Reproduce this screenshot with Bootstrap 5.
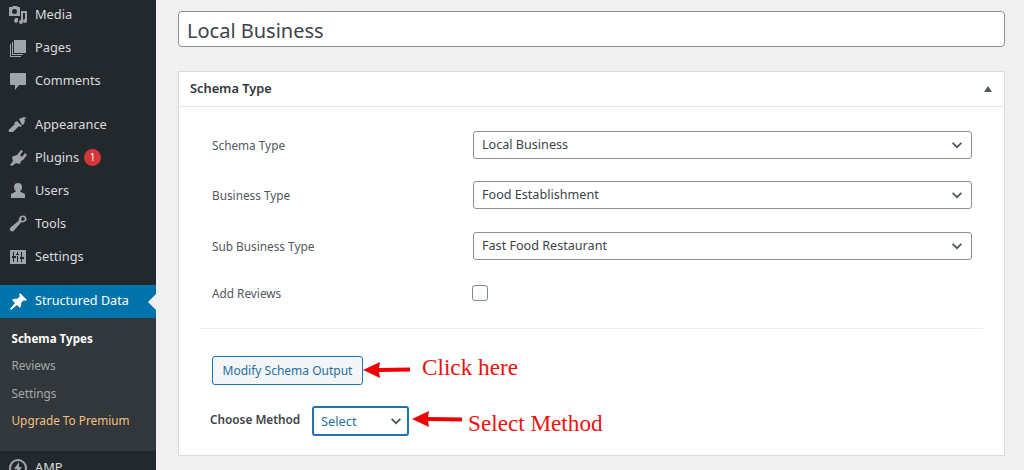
<!DOCTYPE html>
<html lang="en"><head><meta charset="utf-8"><title>Local Business</title>
<link rel="stylesheet" href="https://cdn.jsdelivr.net/npm/bootstrap@5.3.0/dist/css/bootstrap.min.css">
<style>
html,body{height:470px;overflow:hidden}
body{background:#f0f0f1;font-family:"Noto Sans","Open Sans",sans-serif;color:#3c434a;width:1024px}
.wp-shell{height:470px}
.wp-side{width:156px;flex:none;background:#23282d;height:470px;overflow:hidden;margin-right:1px}
.wp-menu{margin-top:-2px}
.wp-item{height:33px;display:flex;align-items:center;color:#d9dbdd;font-size:12.8px;padding-left:8px;text-decoration:none;position:relative}
.wp-item:hover{color:#d9dbdd}
.wp-item svg{width:20px;height:20px;flex:none;margin-right:7px;fill:#a0a5aa}
.wp-gap{height:11px}
.wp-gap2{height:12px}
.wp-cur,.wp-cur:hover{background:#0073aa;color:#fff;font-size:12.6px}
.wp-cur svg{fill:#fff}
.wp-cur::after{content:"";position:absolute;right:0;top:9px;border:8px solid transparent;border-right-color:#f0f0f1;border-left:0}
.wp-sub{background:#32373c;height:133px;padding-top:7px}
.wp-sub a{display:block;height:27.3px;line-height:27.3px;font-size:11.8px;padding-left:11.5px;color:#a5a8ab;text-decoration:none}
.wp-sub a.on{color:#fff;font-weight:700;font-size:11.6px}
.wp-sub a.up{color:#f5c27d}
.wp-count{display:inline-flex;width:17px;height:17px;border-radius:50%;background:#d63638;color:#fff;font-size:10px;align-items:center;justify-content:center;margin-left:5px}
.wp-main{padding:11px 19px 0 21px;width:867px;flex:none}
.title-in{height:36px;border:1px solid #8c8f94;border-radius:4px;font-size:20px;padding:2px 8px 0;color:#3c434a;background:#fff;box-shadow:none}
.meta-box{margin-top:24px;height:385px;background:#fff;border:1px solid #dcdcde}
.meta-head{height:35px;border-bottom:1px solid #e5e5e5;padding:0 12px 0 11px;font-size:12.8px;font-weight:600;color:#32373c}
.caret-up{width:0;height:0;border:4.500px solid transparent;border-top:0;border-bottom:6px solid #50575e}
.meta-body{padding:24px 21px 0}
.f-row{height:28px;padding-left:12px;font-size:11.8px;color:#50575e}
.f-label{width:261px;flex:none;padding-top:2px}
.wp-select,.meth-select{--chev:url("data:image/svg+xml,%3csvg xmlns='http://www.w3.org/2000/svg' viewBox='0 0 16 16'%3e%3cpath fill='none' stroke='%2350575e' stroke-width='2' d='M3 5.500l5 5 5-5'/%3e%3c/svg%3e");background-image:var(--chev);box-shadow:none;line-height:26px}
.wp-select{height:28px;width:499px;padding:0 24px 0 8px;font-size:12.6px;color:#3c434a;border:1px solid #8c8f94;border-radius:3px;background-size:16px 14px;background-position:right 6px center}
.chk{width:16px;height:16px;margin:0 0 0 -1px;border:1px solid #7e8993;border-radius:4px}
.rule{border-top:1px solid #eee;margin:21px 0 0;height:0}
.mod-btn{height:29px;width:151px;padding:0;font-size:12px;color:#2271a1;background:#f3f5f6;border:1px solid #2271b1;border-radius:3px;white-space:nowrap}
.note{font-family:"Liberation Serif",serif;color:#ee1111;font-size:23.2px;line-height:1;white-space:nowrap}
.meth-label{font-size:11.8px;font-weight:600;color:#3c434a;width:102px;flex:none;margin-left:-2px;margin-top:-3px}
.meth-select{height:30px;width:97px;padding:0 20px 0 7px;font-size:12.8px;color:#2271a1;border:2px solid #2271b1;border-radius:3px;background-size:16px 14px;background-position:right 3px center}
.arrow-pic{flex:none}
.f2{margin-top:22px}.f3{margin-top:23px}.f4{margin-top:19px}
.f5{margin-top:27px;padding-left:12px}
.f6{margin-top:21px;padding-left:12px}
.n1{margin-left:12px;margin-top:-5px}
.a1{margin-top:-1px}
.n2{margin-left:6px;margin-top:5px}
.a2{margin-left:3px;margin-top:-4px}
</style></head><body>
<div class="wp-shell d-flex">
<nav class="wp-side"><div class="wp-menu">
<a class="wp-item" href="#"><svg viewBox="0 0 20 20"><path fill-rule="evenodd" d="M1 2h3l1-1h4l1 1h2v9H1zm5.500 2a2.500 2.500 0 1 0 0 5 2.500 2.500 0 0 0 0-5zM13 6h6v10a2 2 0 1 1-2-2V8h-2v9a2 2 0 1 1-2-2zM7 13h3v3a2 2 0 1 1-3-2z"/></svg>Media</a>
<a class="wp-item" href="#"><svg viewBox="0 0 20 20"><path d="M6 2h12v13H6zM4 4h1v12h10v1H4zM2 6h1v12h10v1H2z"/></svg>Pages</a>
<a class="wp-item" href="#"><svg viewBox="0 0 20 20"><path d="M3 2h14a1 1 0 0 1 1 1v10a1 1 0 0 1-1 1h-6l-4 5v-5H3a1 1 0 0 1-1-1V3a1 1 0 0 1 1-1z"/></svg>Comments</a>
<div class="wp-gap"></div>
<a class="wp-item" href="#"><svg viewBox="0 0 20 20"><path d="M11 4l5-2 3 1-3 1 1 1-1 4-2 1zM9 6l5 5-2 1-1-1-6 6-4 0-.5-2 6.500-6-1-1z"/></svg>Appearance</a>
<a class="wp-item" href="#"><svg viewBox="0 0 20 20"><path d="M13 2l2 1-3 4 2 2 3-4 2 2-4 5-2 1-1 3-4-1-4 3-2-1 3-4-1-4 2-1 3-1z"/></svg>Plugins<span class="wp-count">1</span></a>
<a class="wp-item" href="#"><svg viewBox="0 0 20 20"><path d="M10 2a4 4 0 0 1 4 4c0 2-1 3.500-2 4.500l5 2.500v4H3v-4l5-2.500C7 9.500 6 8 6 6a4 4 0 0 1 4-4z"/></svg>Users</a>
<a class="wp-item" href="#"><svg viewBox="0 0 20 20"><path fill-rule="evenodd" d="M15 1.500c2.500 0 4 2 3.500 5l-3.500 2-1.500-.5-7.500 8.500c-1 1.500-3.500 1-4-.5s0-2 1-3l7.500-6 .5-2.500c.5-2 2-3 4.500-3zM14 3l-1 3 2 1 2-2c-.5-1.500-1.500-2-3-2z"/></svg>Tools</a>
<a class="wp-item" href="#"><svg viewBox="0 0 20 20"><path fill-rule="evenodd" d="M2 3h16v14H2zM5 5v4H4v2h1v4h1v-4h2V9H6V5zm8 0v5h-1v2h1v3h1v-3h2v-2h-2V5zM9 5v2H8v1h3V7h-1V5zm0 4v6h1V9z"/></svg>Settings</a>
<div class="wp-gap2"></div>
<a class="wp-item wp-cur" href="#"><svg viewBox="0 0 20 20"><path d="M12 1l7 7-2 1-1-1-3 3c.500 2 0 3.500-1 5l-3-3-6 5-1-1 5-6-3-3c1.500-1 3-1.500 5-1l3-3-1-1z"/></svg>Structured Data</a>
<div class="wp-sub"><a class="on" href="#">Schema Types</a><a href="#">Reviews</a><a href="#">Settings</a><a class="up" href="#">Upgrade To Premium</a></div>
<a class="wp-item" href="#"><svg viewBox="0 0 20 20"><path fill-rule="evenodd" d="M10 1a9 9 0 1 1 0 18 9 9 0 0 1 0-18zm0 2a7 7 0 1 0 0 14 7 7 0 0 0 0-14zm1 1v5h3l-5 7v-5H6z"/></svg>AMP</a>
</div></nav>
<main class="wp-main">
<input class="form-control title-in" type="text" value="Local Business" aria-label="Title">
<section class="meta-box">
<div class="meta-head d-flex align-items-center justify-content-between"><span>Schema Type</span><span class="caret-up"></span></div>
<div class="meta-body">
<div class="f-row d-flex align-items-center"><span class="f-label">Schema Type</span><select class="form-select wp-select"><option>Local Business</option></select></div>
<div class="f-row d-flex align-items-center f2"><span class="f-label">Business Type</span><select class="form-select wp-select"><option>Food Establishment</option></select></div>
<div class="f-row d-flex align-items-center f3"><span class="f-label">Sub Business Type</span><select class="form-select wp-select"><option>Fast Food Restaurant</option></select></div>
<div class="f-row d-flex align-items-center f4"><span class="f-label">Add Reviews</span><input class="form-check-input chk" type="checkbox" aria-label="Add Reviews"></div>
<div class="rule"></div>
<div class="d-flex align-items-center f5"><button class="btn mod-btn" type="button">Modify Schema Output</button>
<svg width="47" height="18" viewBox="0 0 47 18" class="arrow-pic a1"><path fill="#f00000" d="M0 9L17 1l-1 6 31-.5v4L16 11l1 6z"/></svg><span class="note n1">Click here</span></div>
<div class="d-flex align-items-center f6"><span class="meth-label">Choose Method</span><select class="form-select meth-select"><option>Select</option></select>
<svg width="50" height="18" viewBox="0 0 50 18" class="arrow-pic a2"><path fill="#f00000" d="M0 9L17 1l-1 6 34 .5v4L16 11l1 6z"/></svg><span class="note n2">Select Method</span></div>
</div>
</section>
</main>
</div>
</body></html>
